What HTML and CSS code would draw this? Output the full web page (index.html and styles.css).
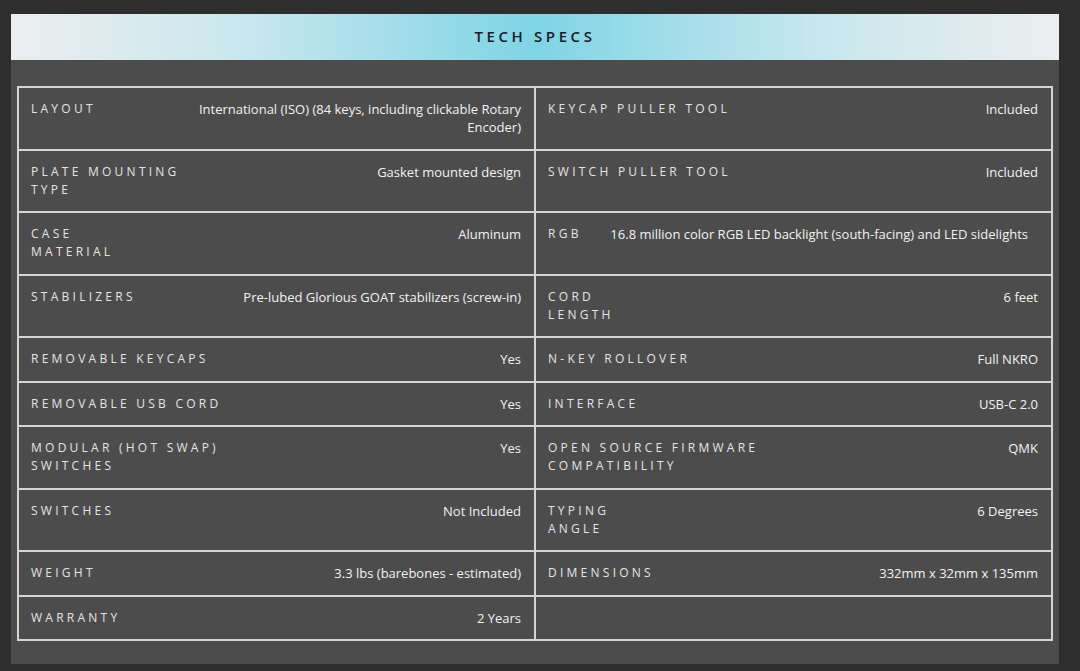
FILE: index.html
```html
<!DOCTYPE html>
<html>
<head>
<meta charset="utf-8">
<link rel="stylesheet" href="styles.css">
</head>
<body>
<div class="page">
  <section class="panel">
    <header class="panel-head"><h2 class="title">TECH SPECS</h2></header>
    <div class="panel-body">
      <table class="specs">
        <tr>
          <td><div class="cell"><span class="label">Layout</span><span class="value">International (ISO) (84 keys, including clickable Rotary<br>Encoder)</span></div></td>
          <td><div class="cell"><span class="label">Keycap Puller Tool</span><span class="value">Included</span></div></td>
        </tr>
        <tr>
          <td><div class="cell"><span class="label">Plate Mounting<br>Type</span><span class="value">Gasket mounted design</span></div></td>
          <td><div class="cell"><span class="label">Switch Puller Tool</span><span class="value">Included</span></div></td>
        </tr>
        <tr>
          <td><div class="cell"><span class="label">Case<br>Material</span><span class="value">Aluminum</span></div></td>
          <td><div class="cell"><span class="label">RGB</span><span class="value value-wide">16.8 million color RGB LED backlight (south-facing) and LED sidelights</span></div></td>
        </tr>
        <tr>
          <td><div class="cell"><span class="label">Stabilizers</span><span class="value">Pre-lubed Glorious GOAT stabilizers (screw-in)</span></div></td>
          <td><div class="cell"><span class="label">Cord<br>Length</span><span class="value">6 feet</span></div></td>
        </tr>
        <tr>
          <td><div class="cell"><span class="label">Removable Keycaps</span><span class="value">Yes</span></div></td>
          <td><div class="cell"><span class="label">N-Key Rollover</span><span class="value">Full NKRO</span></div></td>
        </tr>
        <tr>
          <td><div class="cell"><span class="label">Removable USB Cord</span><span class="value">Yes</span></div></td>
          <td><div class="cell"><span class="label">Interface</span><span class="value">USB-C 2.0</span></div></td>
        </tr>
        <tr>
          <td><div class="cell"><span class="label">Modular (Hot Swap)<br>Switches</span><span class="value">Yes</span></div></td>
          <td><div class="cell"><span class="label">Open Source Firmware<br>Compatibility</span><span class="value">QMK</span></div></td>
        </tr>
        <tr>
          <td><div class="cell"><span class="label">Switches</span><span class="value">Not Included</span></div></td>
          <td><div class="cell"><span class="label">Typing<br>Angle</span><span class="value">6 Degrees</span></div></td>
        </tr>
        <tr>
          <td><div class="cell"><span class="label">Weight</span><span class="value">3.3 lbs (barebones - estimated)</span></div></td>
          <td><div class="cell"><span class="label">Dimensions</span><span class="value">332mm x 32mm x 135mm</span></div></td>
        </tr>
        <tr>
          <td><div class="cell"><span class="label">Warranty</span><span class="value">2 Years</span></div></td>
          <td></td>
        </tr>
      </table>
    </div>
  </section>
</div>
</body>
</html>
```

FILE: styles.css
```css
html, body {
  margin: 0;
  padding: 0;
}
body {
  background: #2e2e2e;
  font-family: "Open Sans", "Liberation Sans", sans-serif;
  width: 1080px;
  height: 671px;
  overflow: hidden;
}
.page {
  padding: 14px 21px 0 11px;
}
.panel {
  width: 1048px;
  height: 650px;
  background: #4c4c4c;
  display: flex;
  flex-direction: column;
}
.panel-head {
  height: 46px;
  flex: none;
  display: flex;
  align-items: center;
  justify-content: center;
  background: linear-gradient(90deg, #eceeef 0%, #c9e7ee 22%, #7fd4e5 50%, #c9e7ee 78%, #eceeef 100%);
}
.title {
  margin: 0 0 2px 0;
  font-family: "Open Sans", sans-serif;
  font-size: 15px;
  font-weight: 600;
  letter-spacing: 3.6px;
  color: #15202b;
}
.panel-body {
  padding: 26px 6px 0 6px;
}
.specs {
  width: 1036px;
  border-collapse: collapse;
  table-layout: fixed;
  border: 2px solid #d4d4d4;
}
.specs td {
  border: 2px solid #d4d4d4;
  padding: 12px 13px 12.5px 12px;
  vertical-align: top;
  width: 50%;
}
.cell {
  display: flex;
  justify-content: space-between;
  align-items: flex-start;
  gap: 20px;
}
.label {
  text-transform: uppercase;
  font-size: 12px;
  font-weight: 500;
  letter-spacing: 3.25px;
  line-height: 18px;
  color: #e4e4e4;
  white-space: nowrap;
  flex: none;
}
.value {
  font-size: 13px;
  line-height: 18px;
  color: #f2f2f2;
  text-align: right;
}
.value-wide {
  margin-right: 10px;
}
```
